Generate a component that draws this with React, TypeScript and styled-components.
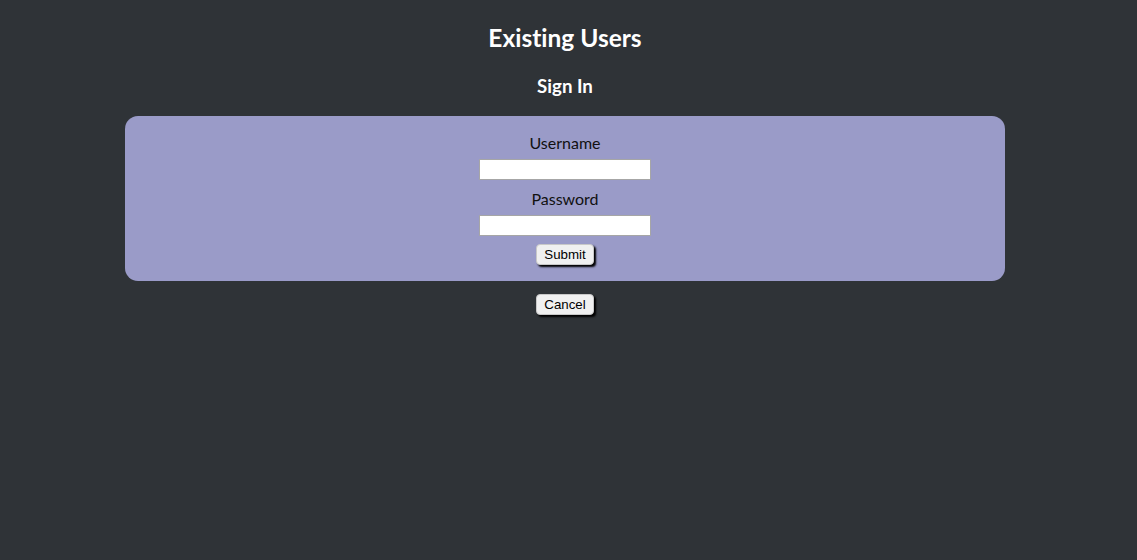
import { FC } from 'react'
import styled, { createGlobalStyle } from 'styled-components'

const GlobalStyle = createGlobalStyle`
  html, body {
    margin: 0;
    background: #2f3337;
  }
  body {
    font-family: Lato, 'Noto Sans', sans-serif;
    font-variant-ligatures: none;
  }
`

const Page = styled.main`
  width: 1130px;
  min-height: 560px;
  display: flex;
  flex-direction: column;
  align-items: center;
  padding-top: 22px;
  box-sizing: border-box;
`

const Title = styled.h2`
  margin: 0;
  color: #fff;
  font-size: 24.5px;
  line-height: 32px;
  font-weight: 700;
`

const Subtitle = styled.h3`
  margin: 19px 0 0;
  color: #fff;
  font-size: 18.7px;
  line-height: 26px;
  font-weight: 700;
`

const Panel = styled.form`
  margin-top: 17px;
  width: 880px;
  box-sizing: border-box;
  padding: 16px 0 16px;
  background: #9a9bc8;
  border-radius: 13px;
  display: flex;
  flex-direction: column;
  align-items: center;
`

const Label = styled.label<{ $gap: number }>`
  margin-top: ${(p) => p.$gap}px;
  color: #111;
  font-size: 16px;
  line-height: 22px;
`

const Input = styled.input`
  margin-top: 5px;
  width: 172px;
  height: 21px;
  box-sizing: border-box;
  border: 1px solid #a6a6a6;
  background: #fff;
  padding: 0 3px;
`

const Button = styled.button<{ $top: number }>`
  margin-top: ${(p) => p.$top}px;
  height: 21px;
  padding: 0 7px;
  font-family: Arial, 'Liberation Sans', sans-serif;
  font-size: 13.3px;
  color: #000;
  background: #f0f0f0;
  border: 1px solid #c8c8c8;
  border-radius: 4px;
  box-shadow: 2px 2px 2px #000;
  cursor: pointer;
`

const App: FC = () => {
  return (
    <>
      <GlobalStyle />
      <Page>
        <Title>Existing Users</Title>
        <Subtitle>Sign In</Subtitle>
        <Panel onSubmit={(e) => e.preventDefault()}>
          <Label $gap={0} htmlFor='username'>Username</Label>
          <Input id='username' type='text' name='username' />
          <Label $gap={8} htmlFor='password'>Password</Label>
          <Input id='password' type='password' name='password' />
          <Button $top={8} type='submit'>Submit</Button>
        </Panel>
        <Button $top={13} type='button'>Cancel</Button>
      </Page>
    </>
  )
}

export default App
